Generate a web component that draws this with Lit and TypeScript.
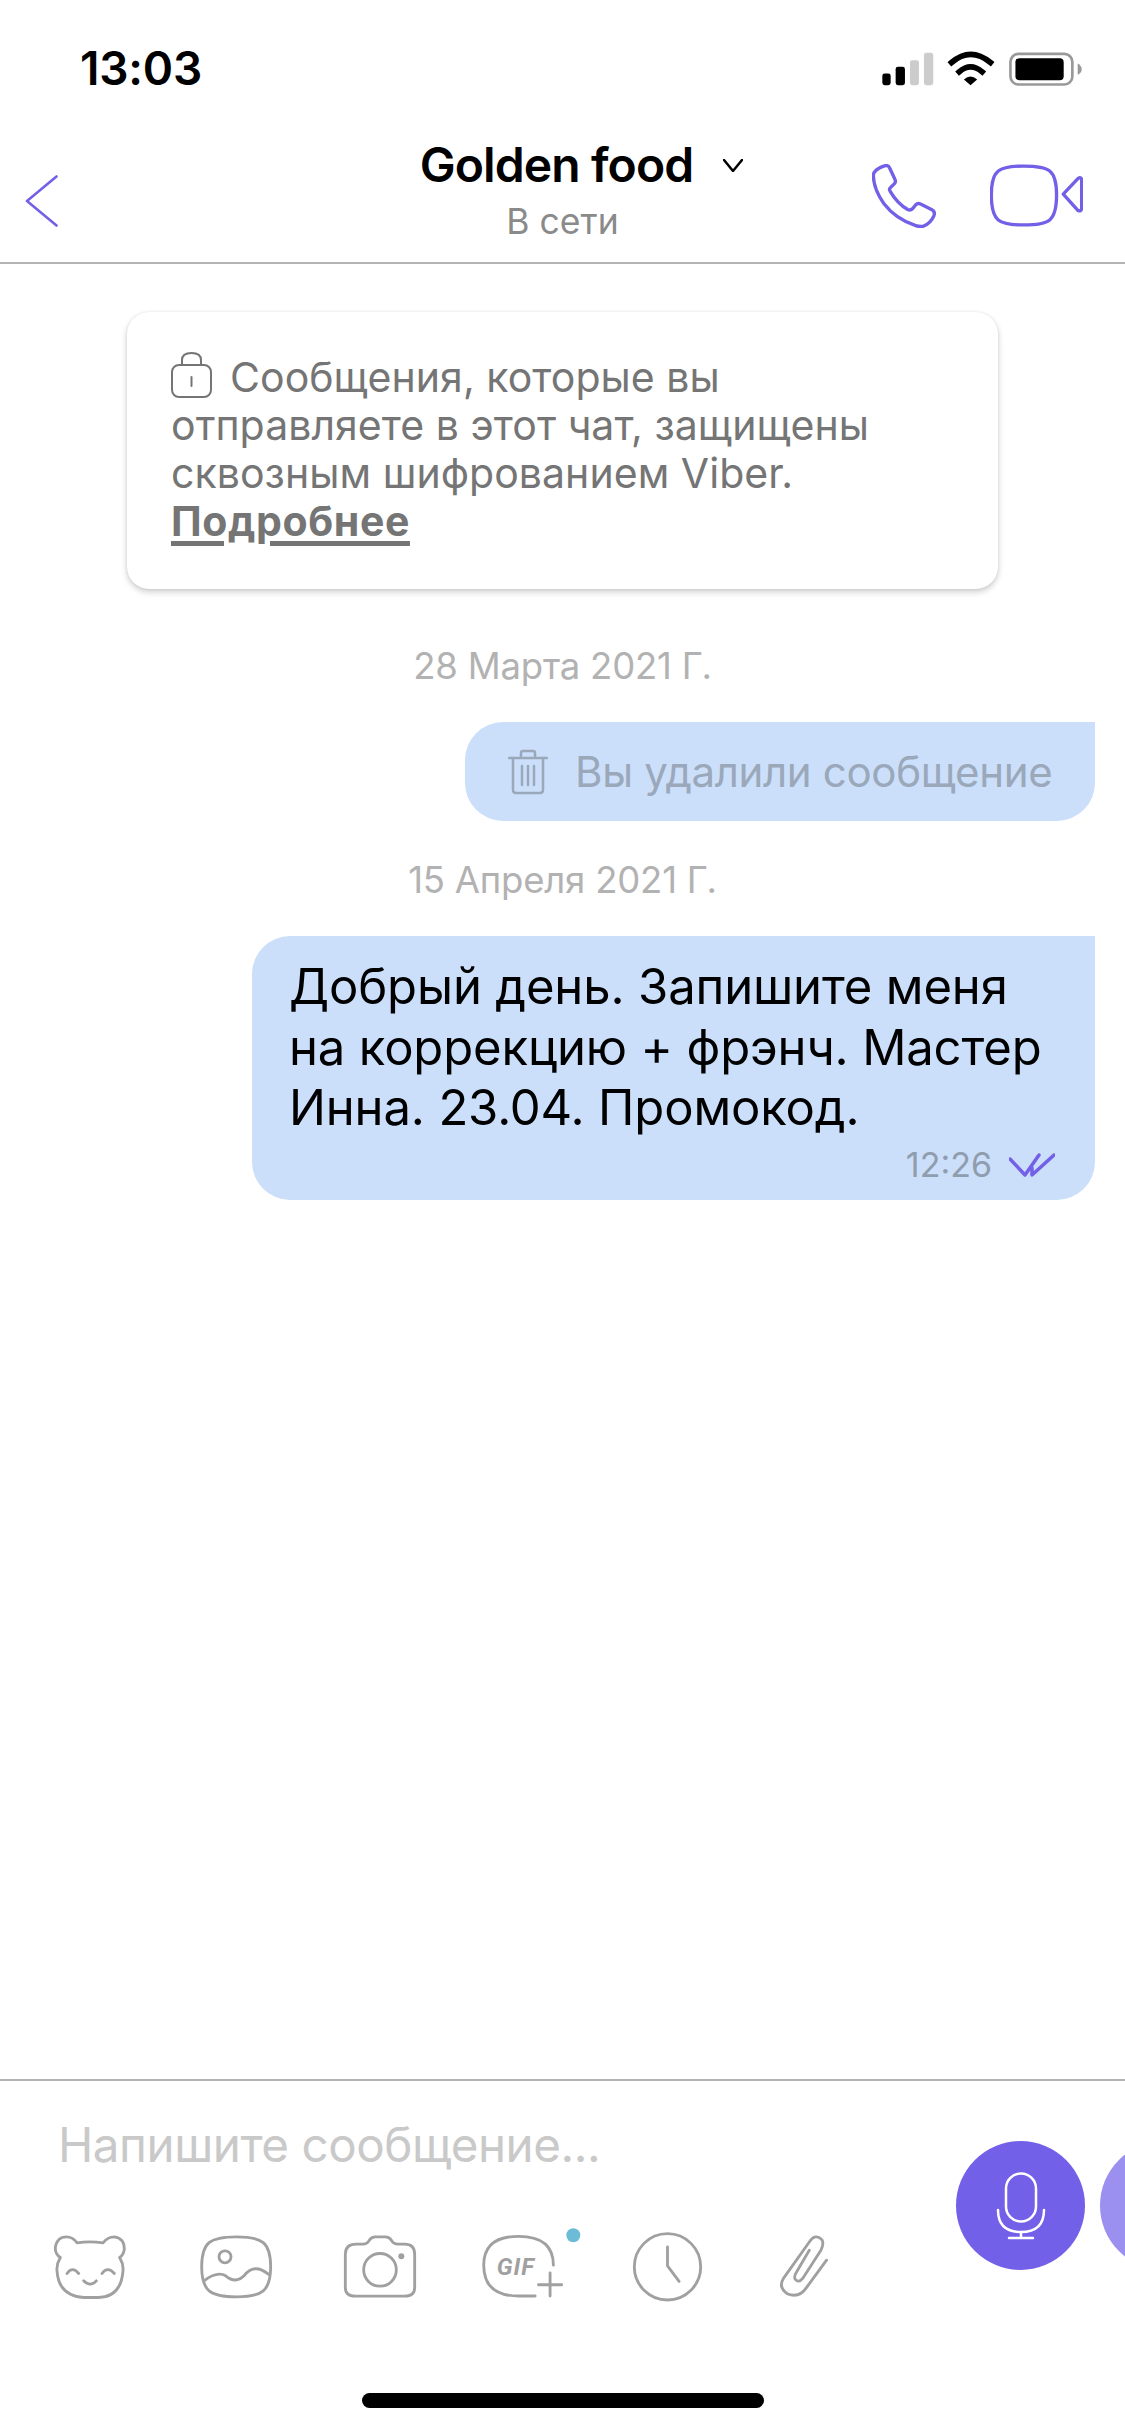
import { LitElement, html, css, svg } from "lit";
import { customElement } from "lit/decorators.js";

const P = "#7360e8";

const icon = (vb: string, w: number, h: number, cls: string, body: unknown) =>
  html`<svg class=${cls} viewBox=${vb} width=${w} height=${h} fill="none" stroke-linecap="round" stroke-linejoin="round">${body}</svg>`;

@customElement("app-root")
export class AppRoot extends LitElement {
  static styles = css`
    :host { display: block; width: 1125px; height: 2418px; background: #fff; }
    * { box-sizing: border-box; }
    svg { display: block; flex: none; }
    .app { width: 1125px; height: 2418px; display: flex; flex-direction: column; overflow: hidden;
      font-family: Inter, "Liberation Sans", sans-serif; color: #000; }

    .status { height: 100px; flex: none; display: flex; justify-content: space-between; align-items: flex-start;
      padding: 48px 42px 0 80px; }
    .clock { font-size: 46px; line-height: 40px; font-weight: 600; letter-spacing: -0.2px; }
    .sys { margin-top: 2px; }

    .nav { height: 164px; flex: none; border-bottom: 2px solid #b4b4b4; display: grid;
      grid-template-columns: 1fr auto 1fr; align-items: start; padding: 0 42px; }
    .back { margin: 75px 0 0 -17px; }
    .who { display: flex; flex-direction: column; align-items: center; padding-top: 41px; }
    .title { display: flex; align-items: center; gap: 30px; padding-left: 38px; height: 48px; }
    .name { font-size: 48px; line-height: 48px; font-weight: 600; letter-spacing: -0.9px; }
    .sub { font-size: 35.5px; line-height: 42px; color: #8a8a8a; margin-top: 12px; }
    .calls { display: flex; justify-content: flex-end; align-items: flex-start; gap: 54px; padding-top: 64px; }

    .chat { flex: 1; display: flex; flex-direction: column; min-height: 0; }
    .notice { margin: 48px 0 0 127px; width: 871px; height: 277px; flex: none; border-radius: 22px; background: #fff;
      box-shadow: 0 3px 6px rgba(0,0,0,.2), 0 0 2px rgba(0,0,0,.1); padding: 39px 20px 0 44px;
      font-size: 41px; line-height: 48px; color: #757575; letter-spacing: 0.05px; }
    .lock { display: inline-block; vertical-align: -6px; margin-right: 18px; }
    .more { font-weight: 700; text-decoration: underline; text-decoration-thickness: 5px; text-underline-offset: 5px;
      line-height: 44px; display: inline-block; letter-spacing: 0.6px; }
    .date { text-align: center; font-size: 36.5px; line-height: 42px; color: #b2b2b2; letter-spacing: -0.2px; flex: none; }
    .date.a { margin-top: 56px; margin-bottom: 35px; }
    .date.b { margin-top: 38px; margin-bottom: 35px; }
    .bubble { align-self: flex-end; margin-right: 30px; background: #cbdffa; border-radius: 38px 0 38px 38px; flex: none; }
    .deleted { width: 630px; height: 99px; display: flex; align-items: center; gap: 27px; padding-left: 43px;
      font-size: 42px; color: #9aa8ba; letter-spacing: -0.35px; }
    .msg { width: 843px; height: 264px; padding: 21px 0 0 37px; }
    .text { font-size: 49px; line-height: 60.5px; letter-spacing: -0.15px; }
    .meta { display: flex; justify-content: flex-end; align-items: center; gap: 17px; padding-right: 40px; margin-top: 6px;
      font-size: 34px; line-height: 40px; color: #8f9dae; }

    .composer { height: 314px; flex: none; border-top: 2px solid #b4b4b4; display: flex; justify-content: space-between; overflow: hidden; }
    .left { display: flex; flex-direction: column; padding-left: 52px; }
    .ph { font-size: 47.5px; line-height: 56px; color: #c9c9c9; margin: 36px 0 0 6px; letter-spacing: -0.45px; }
    .tools { display: flex; align-items: flex-start; margin-top: 61px; }
    .tool-b { margin-left: 72px; }
    .tool-c { margin-left: 69px; }
    .tool-d { margin-left: 62px; margin-top: -7px; }
    .tool-e { margin-left: 49px; margin-top: -3px; }
    .tool-f { margin-left: 72px; margin-top: -2px; }
    .gif { font: italic 700 72px Roboto, sans-serif; letter-spacing: 3px; fill: #a0a0a0; }
    .round { display: flex; gap: 15px; padding-top: 60px; margin-right: -104px; }
    .dot { width: 129px; height: 129px; border-radius: 50%; background: #7360e8; display: flex; align-items: center; justify-content: center; }
    .dot.light { background: #9b8fef; }
    .home { height: 15px; width: 402px; background: #000; border-radius: 8px; margin: 0 0 10px 362px; flex: none; }
  `;

  render() {
    return html`<div class="app">
      <div class="status">
        <span class="clock">13:03</span>
        <svg class="sys" viewBox="60 60 610 110" width="203" height="37">
          <rect x="67" y="130" width="25" height="35" rx="7" fill="#000"/>
          <rect x="107" y="110" width="28" height="55" rx="7" fill="#000"/>
          <rect x="150" y="90" width="27" height="75" rx="7" fill="#ccc"/>
          <rect x="192" y="68" width="28" height="97" rx="7" fill="#ccc"/>
          <path d="M275 97 Q332 48 392 97 M298 125 Q332 95 367 125" fill="none" stroke="#000" stroke-width="17" stroke-linecap="square"/>
          <path d="M312 148 Q332 130 352 148 L332 165Z" fill="#000"/>
          <rect x="452" y="71" width="186" height="92" rx="24" fill="none" stroke="#999" stroke-width="8"/>
          <rect x="467" y="84" width="145" height="66" rx="12" fill="#000"/>
          <path d="M654 100 Q666 106 666 117 Q666 128 654 134Z" fill="#999"/>
        </svg>
      </div>

      <div class="nav">
        ${icon("0 0 33 52", 33, 52, "back", svg`<path d="M31.500 1.500 L2 26 L31.500 50.500" stroke=${P} stroke-width="2.600"/>`)}
        <div class="who">
          <div class="title"><span class="name">Golden food</span>
            ${icon("0 0 20 13", 20, 13, "", svg`<path d="M1 1 L10 12 L19 1" stroke="#000" stroke-width="2.500"/>`)}
          </div>
          <span class="sub">В сети</span>
        </div>
        <div class="calls">
          ${icon("70 105 190 190", 64, 64, "", svg`<path stroke=${P} stroke-width="10" d="M78 128 Q90 115 110 110 Q118 108 122 116 L138 150 Q142 158 136 164 L124 176 Q120 180 124 186 Q145 222 176 240 Q184 244 190 238 L200 226 Q206 220 214 224 L248 241 Q258 246 254 258 Q245 280 222 290 Q212 292 200 288 Q140 268 105 222 Q75 180 74 140 Q74 132 78 128Z"/>`)}
          ${icon("423 108 278 188", 93, 63, "", svg`<path stroke=${P} stroke-width="10" d="M524 114 C600 114 622 125 622 200 C622 280 600 290 524 290 C450 290 427 280 427 200 C427 125 450 114 524 114Z M642 198 L685 152 Q696 144 697 156 L697 240 Q696 252 685 246Z"/>`)}
        </div>
      </div>

      <div class="chat">
        <div class="notice">
          ${icon("0 0 41 47", 41, 47, "lock", svg`<g stroke="#757575" stroke-width="2"><rect x="1" y="14" width="39" height="32" rx="7"/><path d="M11 14 V9 Q11 2 20.500 2 Q30 2 30 9 V14 M20.500 26 V35"/></g>`)}Сообщения, которые вы<br>отправляете в этот чат, защищены<br>сквозным шифрованием Viber.<br><span class="more">Подробнее</span>
        </div>
        <div class="date a">28 Марта 2021 Г.</div>
        <div class="bubble deleted">
          ${icon("0 0 40 46", 40, 46, "", svg`<path stroke="#9aa8ba" stroke-width="2.500" d="M1 9 H39 M13 9 V4 Q13 2 15 2 H25 Q27 2 27 4 V9 M5 9 V41 Q5 44 8 44 H32 Q35 44 35 41 V9 M14 17 V36 M20 17 V36 M26 17 V36"/>`)}
          <span>Вы удалили сообщение</span>
        </div>
        <div class="date b">15 Апреля 2021 Г.</div>
        <div class="bubble msg">
          <div class="text">Добрый день. Запишите меня<br>на коррекцию + фрэнч. Мастер<br>Инна. 23.04. Промокод.</div>
          <div class="meta"><span>12:26</span>
            ${icon("0 0 46 24", 46, 24, "", svg`<path stroke=${P} stroke-width="3.500" d="M1 6 L16 22 L30 2 M23 15 L23 22 L45 2"/>`)}
          </div>
        </div>
      </div>

      <div class="composer">
        <div class="left">
          <div class="ph">Напишите сообщение...</div>
          <div class="tools">
            ${icon("65 70 225 200", 75, 67, "", svg`<g stroke="#a0a0a0" stroke-width="8.500"><path d="M140 96 Q178 90 218 96 Q232 78 252 78 Q282 82 282 115 Q280 132 268 140 Q280 160 278 180 Q272 258 205 260 L160 260 Q85 255 80 180 Q78 160 90 140 Q74 130 75 110 Q80 78 108 78 Q128 78 140 96Z M110 188 Q126 165 145 188 M215 188 Q232 165 252 188 M160 210 Q180 230 198 210"/></g>`)}
            ${icon("510 70 225 200", 75, 67, "tool-b", svg`<g stroke="#a0a0a0" stroke-width="8.500"><path d="M622 78 C700 78 725 95 725 168 C725 240 700 258 622 258 C543 258 518 240 518 168 C518 95 543 78 622 78Z M525 210 Q565 180 590 195 Q620 220 645 195 Q675 155 718 190"/><circle cx="588" cy="138" r="18"/></g>`)}
            ${icon("945 70 225 200", 75, 67, "tool-c", svg`<g stroke="#a0a0a0" stroke-width="8.500"><path d="M952 130 Q952 100 985 100 L1005 100 Q1018 100 1024 88 Q1030 78 1042 78 L1072 78 Q1084 78 1090 88 Q1096 100 1110 100 L1130 100 Q1160 100 1160 130 L1160 230 Q1160 256 1130 256 L982 256 Q952 256 952 230Z"/><circle cx="1056" cy="177" r="49"/></g><circle cx="1120" cy="136" r="9" fill="#a0a0a0"/>`)}
            <svg class="tool-d" viewBox="65 50 305 220" width="102" height="73" fill="none" stroke-linecap="round">
              <g stroke="#a0a0a0" stroke-width="8.500"><path d="M285 165 Q285 78 180 78 Q75 78 75 165 Q75 258 180 258 L230 258 M275 188 V258 M240 224 H310"/></g>
              <text x="114" y="195" class="gif">GIF</text>
              <circle cx="345" cy="75" r="21" fill="#6cbcd8"/>
            </svg>
            ${icon("515 60 220 220", 73, 73, "tool-e", svg`<g stroke="#a0a0a0" stroke-width="8.500"><circle cx="625" cy="168" r="100"/><path d="M625 108 V165 L660 212"/></g>`)}
            ${icon("950 65 165 205", 55, 68, "tool-f", svg`<path stroke="#a0a0a0" stroke-width="8.500" d="M1102 150 L1042 232 Q1020 265 985 252 Q955 232 972 205 L1050 95 Q1068 68 1088 88 Q1095 100 1085 120 L1030 205 Q1018 220 1008 208 Q1002 200 1012 185 L1050 120"/>`)}
          </div>
        </div>
        <div class="round">
          <div class="dot">
            ${icon("0 0 50 68", 50, 68, "", svg`<path stroke="#fff" stroke-width="2.500" d="M2 38 C2 55 12 60 25 60 C38 60 48 55 48 38 M25 60 V66 M13 66 H37"/><rect x="10" y="1.500" width="30" height="48" rx="15" stroke="#fff" stroke-width="2.500"/>`)}
          </div>
          <div class="dot light"></div>
        </div>
      </div>
      <div class="home"></div>
    </div>`;
  }
}

declare global { interface HTMLElementTagNameMap { "app-root": AppRoot; } }
